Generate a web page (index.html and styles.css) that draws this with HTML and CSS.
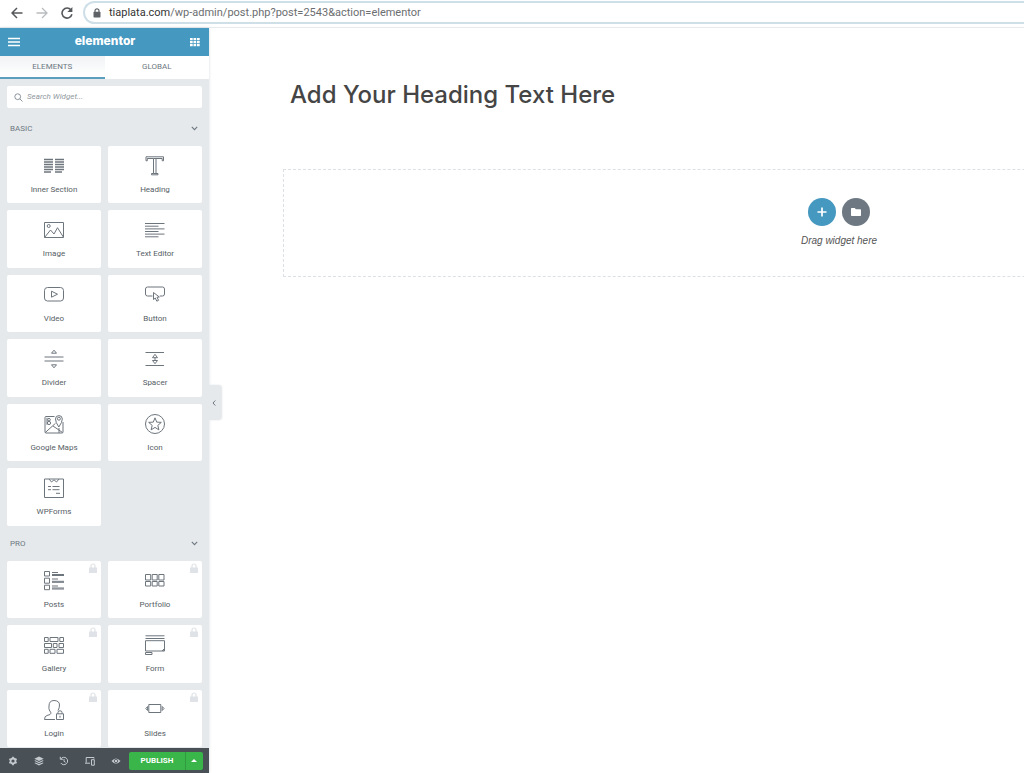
FILE: index.html
```html
<!DOCTYPE html>
<html lang="en">
<head>
<meta charset="utf-8">
<title>Elementor</title>
<link rel="stylesheet" href="styles.css">
</head>
<body>
<div class="browser">
  <button class="nav-btn" aria-label="Back"><svg width="12" height="12" viewBox="0 0 12 12"><path d="M11.5 6H1M6 1 1 6l5 5" fill="none" stroke="#55585b" stroke-width="1.5"/></svg></button>
  <button class="nav-btn" aria-label="Forward"><svg width="12" height="12" viewBox="0 0 12 12"><path d="M.5 6H11M6 1l5 5-5 5" fill="none" stroke="#b9bcbf" stroke-width="1.3"/></svg></button>
  <button class="nav-btn" aria-label="Reload"><svg width="12" height="12" viewBox="0 0 12 12"><path d="M10 3A5 5 0 1 0 10.900 7.300" fill="none" stroke="#55585b" stroke-width="1.6"/><path d="M11.400 0v5H6.400z" fill="#55585b"/></svg></button>
  <div class="address">
    <svg width="8" height="10" viewBox="0 0 8 10"><path d="M2 4V2.800a2 2 0 0 1 4 0V4" fill="none" stroke="#5f6368" stroke-width="1.200"/><rect x=".5" y="3.700" width="7" height="5.800" rx=".7" fill="#5f6368"/></svg>
    <span class="url"><span class="host">tiaplata.com</span>/wp-admin/post.php?post=2543&amp;action=elementor</span>
  </div>
</div>
<div class="app">
  <aside class="panel">
    <header class="panel-head">
      <button class="head-btn" aria-label="Menu"><svg width="12" height="10" viewBox="0 0 12 10"><path d="M0 1.500h12M0 5h12M0 8.500h12" stroke="#fff" stroke-width="1.500"/></svg></button>
      <span class="logo">elementor</span>
      <button class="head-btn" aria-label="Widgets"><svg width="10" height="10" viewBox="0 0 10 10" fill="#fff"><path d="M0 1h2.700v2.300H0zM3.500 1h2.700v2.300H3.500zM7 1h2.700v2.300H7zM0 4h2.700v2.300H0zM3.500 4h2.700v2.300H3.500zM7 4h2.700v2.300H7zM0 7h2.700v2.300H0zM3.500 7h2.700v2.300H3.500zM7 7h2.700v2.300H7z"/></svg></button>
    </header>
    <nav class="tabs">
      <button class="tab active">ELEMENTS</button>
      <button class="tab">GLOBAL</button>
    </nav>
    <div class="widgets">
      <label class="search">
        <svg width="9" height="9" viewBox="0 0 9 9" fill="none" stroke="#8b939b"><circle cx="3.700" cy="3.700" r="2.900"/><path d="m5.800 5.800 2.700 2.700"/></svg>
        <input type="search" placeholder="Search Widget..." aria-label="Search Widget">
      </label>
      <button class="category">BASIC<svg width="7" height="5" viewBox="0 0 7 5"><path d="m.8.900 2.700 2.700L6.200.9" fill="none" stroke="#6d7882" stroke-width="1.100"/></svg></button>
      <div class="grid">
        <button class="card"><svg class="icon" viewBox="0 0 20 20"><path d="M0 3.500h9M0 6h9M0 8.500h9M0 11h9M0 13.500h9M0 16h7M11 3.500h9M11 6h9M11 8.500h9M11 11h9M11 13.500h9M11 16h7" stroke-width="1.400"/></svg>Inner Section</button>
        <button class="card"><svg class="icon" viewBox="0 0 20 20"><path d="M1 .8h17.500v4h-1.300V2.500h-6.200v15h2v1.300H6.500v-1.300h2v-15H2.300v2.300H1zM11 2.500H8.500M8.500 17.500H11"/></svg>Heading</button>
        <button class="card"><svg class="icon" viewBox="0 0 20 20"><path d="M.5 2.500h19v15H.5zM.7 17.300 6.500 10l3.500 4 3.500-6.300 6 9.600"/><circle cx="4.700" cy="6" r="1.500"/></svg>Image</button>
        <button class="card"><svg class="icon" viewBox="0 0 20 20"><path d="M0 3.500h19.500M0 6.200h13.500M0 8.900h19.500M0 11.500h13.500M0 14.100h19.500M0 16.800h13.500"/></svg>Text Editor</button>
        <button class="card"><svg class="icon" viewBox="0 0 20 20"><rect x=".5" y="2.500" width="19" height="13.500" rx="3"/><path d="m7.500 6.200 6 3-6 3z"/></svg>Video</button>
        <button class="card"><svg class="icon" viewBox="0 0 20 20"><path d="M7.500 11H2.500q-2 0-2-2V4q0-2 2-2h15q2 0 2 2v5q0 2-2 2h-2.700M8.500 7.500v7l1.800-1.500 1.500 3.200 1.800-.9-1.600-3 2.300-.3z"/></svg>Button</button>
        <button class="card"><svg class="icon" viewBox="0 0 20 20"><path d="M.5 8h19M.5 12h19M7.500 4.200 10 1.200l2.500 3zM7.500 15.800l2.500 3 2.500-3z"/></svg>Divider</button>
        <button class="card"><svg class="icon" viewBox="0 0 20 20"><path d="M.5 3.500h18.500M.5 16.500h18.500M7.500 8.700 10 5.300l2.500 3.400zM7.500 11.500l2.500 3.200 2.500-3.200zM10 8.500v3"/></svg>Spacer</button>
        <button class="card"><svg class="icon" viewBox="0 0 20 20"><path d="M10.500 2.500H2q-1 0-1 1V18q0 1 1 1h16q1 0 1-1V8M1.300 18.500 11.500 9.300M9 12l9.500 6.500M15 14v5M14.800 13q-3.300-4.800-3.300-8a3.300 3.300 0 0 1 6.800 0q0 3.200-3.500 8z"/><circle cx="14.900" cy="4.700" r="1.500"/><circle cx="5" cy="5.700" r="1.300"/><circle cx="5" cy="9" r="1.600"/><path d="M3 3.800v7"/></svg>Google Maps</button>
        <button class="card"><svg class="icon" viewBox="0 0 20 20"><circle cx="10" cy="10" r="9.500"/><path d="m10 3.800 1.700 4.300 4.600.3-3.500 3 1.100 4.500-3.900-2.500-3.900 2.500 1.100-4.500-3.500-3 4.600-.3z"/></svg>Icon</button>
        <button class="card"><svg class="icon" viewBox="0 0 20 20"><path d="M.5 1h19v18.500H.5zM5 1l2.500 3L10 1.800 12.500 4 15 1M4 8.500h3M8.500 8.500h7M4 11.700h3M8.500 11.700h7M12 15.300h4"/></svg>WPForms</button>
      </div>
      <button class="category pro">PRO<svg width="7" height="5" viewBox="0 0 7 5"><path d="m.8.900 2.700 2.700L6.200.9" fill="none" stroke="#6d7882" stroke-width="1.100"/></svg></button>
      <div class="grid">
        <button class="card"><svg class="lock" viewBox="0 0 8 10"><path d="M2 5V3a2 2 0 0 1 4 0v2" fill="none" stroke="#dfe3e7" stroke-width="1.200"/><path d="M0 4.500h8V10H0z" fill="#dfe3e7"/></svg><svg class="icon" viewBox="0 0 20 20"><path d="M.5.500h5V5h-5zM.5 7.200h5v5h-5zM.5 14.200h5v4.500h-5zM8 1.500h6M8 3.500h12M8 4.500h12M8 8h6M8 10.300h12M8 11.300h12M8 15h6M8 17h12M8 18h12"/></svg>Posts</button>
        <button class="card"><svg class="lock" viewBox="0 0 8 10"><path d="M2 5V3a2 2 0 0 1 4 0v2" fill="none" stroke="#dfe3e7" stroke-width="1.200"/><path d="M0 4.500h8V10H0z" fill="#dfe3e7"/></svg><svg class="icon" viewBox="0 0 20 20"><path d="M.5 3.500h5.200V9H.5zM7.200 3.500h5V9h-5zM13.800 3.500H19V9h-5.200zM.5 10.500h5.200V15H.5zM7.200 10.500h5V15h-5zM13.800 10.500H19V15h-5.200z"/></svg>Portfolio</button>
        <button class="card"><svg class="lock" viewBox="0 0 8 10"><path d="M2 5V3a2 2 0 0 1 4 0v2" fill="none" stroke="#dfe3e7" stroke-width="1.200"/><path d="M0 4.500h8V10H0z" fill="#dfe3e7"/></svg><svg class="icon" viewBox="0 0 20 20"><path d="M.5 2.500h3.700v4H.5zM6 2.500h8v4H6zM15.800 2.500h3.700v4h-3.700zM.5 8.500h7v4h-7zM9.300 8.500H13v4H9.300zM15 8.500h4.500v4H15zM.5 14.300h3.700v4H.5zM6 14.300h5v4H6zM13 14.300h6.500v4H13z"/></svg>Gallery</button>
        <button class="card"><svg class="lock" viewBox="0 0 8 10"><path d="M2 5V3a2 2 0 0 1 4 0v2" fill="none" stroke="#dfe3e7" stroke-width="1.200"/><path d="M0 4.500h8V10H0z" fill="#dfe3e7"/></svg><svg class="icon" viewBox="0 0 20 20"><path d="M.5.800h19M.5 3.500h19M.5 5.700h19V16H.5zM.5 17.500H7v2H.5zM19.500 13.500 17 16M19.500 14.800 18.200 16"/></svg>Form</button>
        <button class="card"><svg class="lock" viewBox="0 0 8 10"><path d="M2 5V3a2 2 0 0 1 4 0v2" fill="none" stroke="#dfe3e7" stroke-width="1.200"/><path d="M0 4.500h8V10H0z" fill="#dfe3e7"/></svg><svg class="icon" viewBox="0 0 20 20"><path d="M11 19.500H.5q0-3.500 2.500-4 4-.8 4-2.300 0-1-1.200-2.200-1.300-2-.8-5Q5 .5 10 .5q5.500.2 5.500 4.500 0 3-1.500 5.500M12.500 13.800h7v5.700h-7zM14 13.800v-1.500q0-1.500 2-1.500t2 1.500v1.500M16 15.700v2"/></svg>Login</button>
        <button class="card"><svg class="lock" viewBox="0 0 8 10"><path d="M2 5V3a2 2 0 0 1 4 0v2" fill="none" stroke="#dfe3e7" stroke-width="1.200"/><path d="M0 4.500h8V10H0z" fill="#dfe3e7"/></svg><svg class="icon" viewBox="0 0 20 20"><path d="M3.800 4.500h12v8h-12zM2.600 6.500.8 8.500l1.800 2zM17.200 6.500 19 8.500l-1.800 2z"/></svg>Slides</button>
      </div>
    </div>
    <footer class="toolbar">
      <button class="tool" aria-label="Settings"><svg width="10" height="10" viewBox="0 0 10 10"><circle cx="5" cy="5" r="2.500" fill="none" stroke="#c5cacf" stroke-width="1.800"/><path d="M5 .8v1.500M5 7.700v1.500M1.400 2.900l1.300.8M7.300 6.300l1.300.8M1.400 7.100l1.300-.8M7.300 3.700l1.300-.8" stroke="#c5cacf" stroke-width="1.700"/></svg></button>
      <button class="tool" aria-label="Navigator"><svg width="10" height="10" viewBox="0 0 10 10" fill="#c5cacf"><path d="M5 .5 9.700 2.700 5 5 .3 2.700zM1.500 4.200 5 5.900l3.500-1.700 1.200.6L5 7.200.3 4.800zM1.500 6.400 5 8.100l3.500-1.700 1.200.6L5 9.400.3 7z"/></svg></button>
      <button class="tool" aria-label="History"><svg width="10" height="10" viewBox="0 0 10 10" fill="none" stroke="#c5cacf"><path d="M1.800 3a3.700 3.700 0 1 1 0 4M1.300.8v2.500h2.500M5 3v2.300l1.600 1"/></svg></button>
      <button class="tool" aria-label="Responsive Mode"><svg width="10" height="10" viewBox="0 0 10 10" fill="none" stroke="#c5cacf"><path d="M9 2.500v-1H1.200v5.200M0 7.200h5M6.500 3.700h2.800v5.500H6.500z"/></svg></button>
      <button class="tool" aria-label="Preview"><svg width="10" height="10" viewBox="0 0 10 10"><path d="M.5 5Q5-.2 9.500 5 5 10.200.5 5z" fill="#c5cacf"/><circle cx="5" cy="5" r="1.700" fill="#c5cacf" stroke="#495157" stroke-width=".8"/></svg></button>
      <div class="publish">
        <button class="publish-main">PUBLISH</button>
        <button class="publish-more" aria-label="Save options"><svg width="6" height="3" viewBox="0 0 6 3"><path d="M0 3 3 0l3 3z" fill="#fff"/></svg></button>
      </div>
    </footer>
    <button class="collapse" aria-label="Hide panel"><svg width="4" height="6" viewBox="0 0 4 6"><path d="M3.300.5 1 3l2.300 2.500" fill="none" stroke="#6d7882"/></svg></button>
  </aside>
  <main class="canvas">
    <h1 class="heading">Add Your Heading Text Here</h1>
    <section class="dropzone">
      <div class="actions">
        <button class="round add" aria-label="Add new section"><svg width="10" height="10" viewBox="0 0 10 10"><path d="M5 .5v9M.5 5h9" stroke="#fff" stroke-width="1.700"/></svg></button>
        <button class="round folder" aria-label="Add template"><svg width="10" height="8" viewBox="0 0 10 8"><path d="M.7 0h3l1.200 1.300h4.400q.7 0 .7.700v5.200q0 .8-.7.800H.7Q0 8 0 7.200V.8Q0 0 .7 0z" fill="#fff"/></svg></button>
      </div>
      <p class="hint">Drag widget here</p>
    </section>
  </main>
</div>
</body>
</html>
```
FILE: styles.css
```css
* { box-sizing: border-box; }
body {
  margin: 0;
  height: 100vh;
  display: flex;
  flex-direction: column;
  overflow: hidden;
  background: #fff;
  font-family: Roboto, "Liberation Sans", sans-serif;
}
button {
  margin: 0;
  padding: 0;
  border: 0;
  background: none;
  font: inherit;
  color: inherit;
  display: flex;
  align-items: center;
  justify-content: center;
}
svg { display: block; flex: none; }

.browser {
  flex: none;
  height: 28px;
  display: flex;
  align-items: center;
  gap: 13px;
  padding: 0 0 2px 11px;
  border-bottom: 1px solid #e6eaed;
}
.nav-btn { width: 12px; height: 12px; }
.address {
  flex: 1;
  height: 23px;
  margin-left: -3px;
  display: flex;
  align-items: center;
  gap: 8px;
  padding-left: 8px;
  border: 2px solid #cfdfe8;
  border-right: 0;
  border-radius: 12px 0 0 12px;
}
.url {
  font: 11px/16px Roboto, "Noto Sans", sans-serif;
  color: #6b6e71;
  white-space: nowrap;
}
.host { color: #333; }

.app { flex: 1; min-height: 0; display: flex; }
.panel {
  position: relative;
  flex: none;
  width: 209px;
  display: flex;
  flex-direction: column;
  background: #e6e9ec;
  box-shadow: 0 0 3px #d8dcdf;
}
.panel-head {
  flex: none;
  height: 28px;
  display: flex;
  align-items: center;
  justify-content: space-between;
  padding: 0 9px 0 8px;
  background: #4598bf;
}
.logo {
  padding-bottom: 2px;
  font: 800 12px/16px Inter, sans-serif;
  color: #fff;
}
.tabs { flex: none; display: flex; height: 23px; background: #fff; }
.tab {
  flex: 1;
  border-bottom: 2px solid transparent;
  font-size: 8px;
  color: #6d7882;
}
.tab.active {
  border-bottom-color: #5b9fbe;
  background: linear-gradient(#f1f3f5, #fff);
}

.widgets { flex: 1; min-height: 0; overflow: hidden; padding: 7px 7px 0; }
.search {
  height: 22px;
  display: flex;
  align-items: center;
  gap: 4px;
  padding-left: 7px;
  background: #fff;
  border-radius: 2px;
}
.search input {
  flex: 1;
  min-width: 0;
  padding: 0;
  border: 0;
  outline: 0;
  background: none;
  font: italic 8px/12px Roboto, sans-serif;
}
.search input::placeholder { color: #9098a0; }
.category {
  width: 100%;
  height: 38px;
  padding: 3px 4px 0 3px;
  justify-content: space-between;
  font-size: 8px;
  color: #6d7882;
}
.category.pro { height: 35px; padding-top: 0; }
.grid {
  display: grid;
  grid-template-columns: 1fr 1fr;
  grid-auto-rows: 57px 58px;
  gap: 7px;
}
.card {
  position: relative;
  flex-direction: column;
  justify-content: flex-start;
  gap: 9px;
  padding-top: 10px;
  background: #fff;
  border-radius: 2px;
  font-size: 8px;
  line-height: 10px;
  color: #565e65;
}
.icon {
  width: 20px;
  height: 20px;
  fill: none;
  stroke: #6d757d;
  stroke-width: 1;
}
.lock { position: absolute; top: 2px; right: 4px; width: 8px; height: 10px; }

.toolbar {
  flex: none;
  height: 25px;
  display: flex;
  align-items: center;
  padding-right: 6px;
  background: #495157;
}
.tool { flex: 1; height: 25px; }
.publish {
  flex: none;
  width: 74px;
  height: 18px;
  display: flex;
  border-radius: 2px;
  overflow: hidden;
  background: #39b54a;
  color: #fff;
}
.publish-main { flex: 1; font-size: 8px; font-weight: 700; }
.publish-more { width: 18px; border-left: 1px solid #2f9a3e; }
.collapse {
  position: absolute;
  left: 100%;
  top: 357px;
  width: 12px;
  height: 35px;
  padding-right: 3px;
  background: #e6e9ec;
  border-radius: 0 3px 3px 0;
  box-shadow: 1px 0 2px #e0e3e6;
}

.canvas { flex: 1; min-width: 0; overflow: hidden; padding: 50px 0 0 74px; }
.heading {
  margin: 0 0 57px 7px;
  font: 500 24px/34px Inter, sans-serif;
  color: #454545;
  white-space: nowrap;
}
.dropzone {
  width: 1112px;
  padding: 28px 0;
  display: flex;
  flex-direction: column;
  align-items: center;
  gap: 7px;
  border: 1px dashed #dde1e5;
}
.actions { display: flex; gap: 6px; }
.round { width: 28px; height: 28px; border-radius: 50%; }
.add { background: #4598bf; }
.folder { background: #6d7882; }
.hint {
  margin: 0;
  font: italic 10px/15px "Liberation Sans", sans-serif;
  color: #555;
}
```
